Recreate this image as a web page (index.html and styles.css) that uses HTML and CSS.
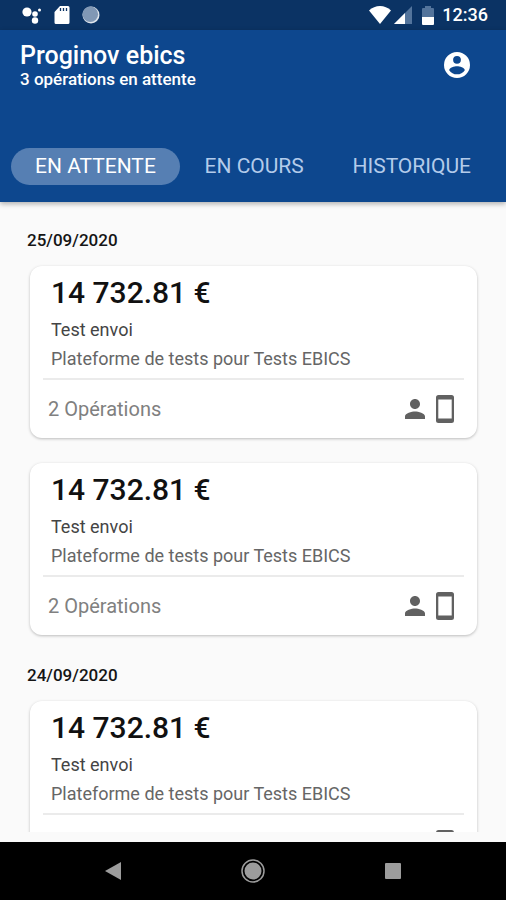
FILE: index.html
```html
<!DOCTYPE html>
<html lang="fr">
<head>
<meta charset="UTF-8">
<meta name="viewport" content="width=device-width, initial-scale=1.0">
<title>Proginov ebics</title>
<link rel="stylesheet" href="styles.css">
</head>
<body>
<svg class="sprite" aria-hidden="true">
  <symbol id="person" viewBox="4 4 16 16">
    <path d="M12 12c2.21 0 4-1.79 4-4s-1.79-4-4-4-4 1.79-4 4 1.79 4 4 4zm0 2c-2.67 0-8 1.34-8 4v2h16v-2c0-2.66-5.33-4-8-4z"/>
  </symbol>
  <symbol id="phone" viewBox="0 0 18 28">
    <path fill-rule="evenodd" d="M2.500 0h13a2.500 2.500 0 0 1 2.500 2.500v23a2.500 2.500 0 0 1-2.500 2.500h-13A2.500 2.500 0 0 1 0 25.500v-23A2.500 2.500 0 0 1 2.500 0zM2.300 4.500v19h13.400v-19z"/>
  </symbol>
</svg>

<div class="status-bar">
  <div class="status-left">
    <svg width="20" height="18" viewBox="0 0 20 18" fill="#fff">
      <circle cx="5" cy="6" r="4.600"/>
      <circle cx="13" cy="8" r="2.800"/>
      <circle cx="17.500" cy="4" r="1.500"/>
      <circle cx="13" cy="14.500" r="3.200"/>
    </svg>
    <svg width="16" height="20" viewBox="0 0 16 20">
      <path fill="#fff" d="M6 1h8a1.500 1.500 0 0 1 1.500 1.500v15A1.500 1.500 0 0 1 14 19H2a1.500 1.500 0 0 1-1.500-1.500V7z"/>
      <path stroke="#0b3364" stroke-width="1.300" d="M6.500 3v3M9.500 3v3M12.500 3v3"/>
    </svg>
    <svg width="18" height="18" viewBox="0 0 18 18">
      <circle cx="9" cy="9" r="8.500" fill="#dfe5ec"/>
      <circle cx="8.300" cy="8.300" r="7.800" fill="#8198b5"/>
    </svg>
  </div>
  <div class="status-right">
    <svg width="22" height="18" viewBox="0 0 22 18">
      <path fill="#fff" d="M11 18L0 4.500C3 1.500 7 0 11 0s8 1.500 11 4.500z"/>
    </svg>
    <svg width="18" height="18" viewBox="0 0 18 18">
      <path fill="#53749c" d="M18 0v18H0z"/>
      <path fill="#fff" d="M11 7v11H0z"/>
    </svg>
    <svg class="battery" width="12" height="19" viewBox="0 0 12 19">
      <path fill="#53749c" d="M3 0h6v2h2a1 1 0 0 1 1 1v9H0V3a1 1 0 0 1 1-1h2z"/>
      <path fill="#fff" d="M0 11h12v7a1 1 0 0 1-1 1H1a1 1 0 0 1-1-1z"/>
    </svg>
    <span class="clock">12:36</span>
  </div>
</div>

<header class="app-header">
  <div class="title-row">
    <div>
      <h1>Proginov ebics</h1>
      <p class="subtitle">3 opérations en attente</p>
    </div>
    <button class="account" aria-label="Compte">
      <svg width="26" height="26" viewBox="2 2 20 20" fill="#fff">
        <path fill-rule="evenodd" d="M12 2a10 10 0 1 0 0 20 10 10 0 0 0 0-20zm0 3a3 3 0 1 1 0 6 3 3 0 0 1 0-6zm0 14.200c-2.500 0-4.710-1.280-6-3.220.03-1.990 4-3.080 6-3.080s5.970 1.090 6 3.080c-1.290 1.940-3.500 3.220-6 3.220z"/>
      </svg>
    </button>
  </div>
  <nav class="tabs">
    <button class="tab active">EN ATTENTE</button>
    <button class="tab">EN COURS</button>
    <button class="tab">HISTORIQUE</button>
  </nav>
</header>

<main class="list">
  <h2>25/09/2020</h2>
  <article class="card">
    <div class="card-body">
      <p class="amount">14 732.81 €</p>
      <p class="label">Test envoi</p>
      <p class="account-name">Plateforme de tests pour Tests EBICS</p>
    </div>
    <div class="card-footer">
      <span>2 Opérations</span>
      <svg class="person"><use href="#person"/></svg>
      <svg class="phone"><use href="#phone"/></svg>
    </div>
  </article>
  <article class="card">
    <div class="card-body">
      <p class="amount">14 732.81 €</p>
      <p class="label">Test envoi</p>
      <p class="account-name">Plateforme de tests pour Tests EBICS</p>
    </div>
    <div class="card-footer">
      <span>2 Opérations</span>
      <svg class="person"><use href="#person"/></svg>
      <svg class="phone"><use href="#phone"/></svg>
    </div>
  </article>
  <h2>24/09/2020</h2>
  <article class="card">
    <div class="card-body">
      <p class="amount">14 732.81 €</p>
      <p class="label">Test envoi</p>
      <p class="account-name">Plateforme de tests pour Tests EBICS</p>
    </div>
    <div class="card-footer">
      <svg class="person"><use href="#person"/></svg>
      <svg class="phone"><use href="#phone"/></svg>
    </div>
  </article>
</main>

<div class="nav-bar">
  <button aria-label="Retour">
    <svg width="16" height="18" viewBox="0 0 16 18"><path fill="#9c9c9c" d="M16 0v18L0 9z"/></svg>
  </button>
  <button aria-label="Accueil">
    <svg width="24" height="24" viewBox="0 0 24 24">
      <circle cx="12" cy="12" r="11" fill="none" stroke="#9c9c9c" stroke-width="1.500"/>
      <circle cx="12" cy="12" r="8.500" fill="#9c9c9c"/>
    </svg>
  </button>
  <button aria-label="Applications">
    <svg width="16" height="16" viewBox="0 0 16 16"><rect width="16" height="16" rx="1" fill="#9c9c9c"/></svg>
  </button>
</div>
</body>
</html>
```
FILE: styles.css
```css
* {
  box-sizing: border-box;
}
body {
  font-family: Roboto, "Liberation Sans", sans-serif;
  background-color: #fafafa;
  margin: 0;
  height: 100vh;
  display: flex;
  flex-direction: column;
}
h1, h2, p {
  margin: 0;
}
button {
  font-family: inherit;
  background: none;
  border: none;
  padding: 0;
  cursor: pointer;
}
svg {
  display: block;
  flex: none;
}
.sprite {
  position: absolute;
  width: 0;
  height: 0;
}

.status-bar {
  height: 30px;
  flex: none;
  background-color: #0b3364;
  display: flex;
  justify-content: space-between;
  align-items: center;
  padding: 0 18px 0 22px;
}
.status-left {
  display: flex;
  align-items: center;
  gap: 12px;
}
.status-right {
  display: flex;
  align-items: center;
  gap: 4px;
}
.status-right svg:first-child {
  margin-right: -1px;
}
.battery {
  margin: 0 4px 0 6px;
}
.clock {
  color: white;
  font-size: 18px;
  font-weight: 500;
  line-height: 30px;
}

.app-header {
  flex: none;
  background-color: #0d478e;
  color: white;
  padding: 12px 0 17px;
  box-shadow: 0 2px 5px rgba(0, 0, 0, 0.3);
  z-index: 1;
}
.title-row {
  display: flex;
  justify-content: space-between;
  align-items: center;
  padding: 0 36px 0 20px;
}
h1 {
  font-size: 25px;
  font-weight: 500;
  line-height: 28px;
}
.subtitle {
  font-size: 17px;
  font-weight: 500;
  line-height: 18px;
}
.tabs {
  display: flex;
  justify-content: space-between;
  padding: 0 11px;
  margin-top: 60px;
}
.tab {
  color: #b3cbea;
  font-size: 21px;
  line-height: 37px;
  padding: 0 24px;
  border-radius: 19px;
  white-space: nowrap;
}
.tab.active {
  color: white;
  background-color: #567fb3;
}

.list {
  flex: 1;
  min-height: 0;
  overflow: hidden;
  margin-bottom: 10px;
  padding: 28px 29px 0 30px;
}
h2 {
  font-size: 17px;
  font-weight: 500;
  line-height: 20px;
  margin: 0 -3px 16px;
  color: #151515;
}
.card {
  background-color: white;
  border-radius: 12px;
  box-shadow: 0 1px 3px rgba(0, 0, 0, 0.25);
  margin-bottom: 25px;
  padding: 0 13px;
}
.card + h2 {
  margin-top: 30px;
}
.card-body {
  padding: 10px 8px 5px;
  border-bottom: 2px solid #ebebeb;
}
.amount {
  font-size: 30px;
  font-weight: 500;
  line-height: 34px;
  color: #111;
  margin-bottom: 5px;
}
.label {
  font-size: 18px;
  line-height: 30px;
  color: #444;
}
.account-name {
  font-size: 18px;
  line-height: 28px;
  color: #666;
}
.card-footer {
  display: flex;
  align-items: center;
  height: 58px;
  padding: 0 10px 0 5px;
  font-size: 20px;
  color: #808080;
}
.card-footer svg {
  fill: #616161;
}
.person {
  width: 20px;
  height: 20px;
  margin-left: auto;
}
.phone {
  width: 18px;
  height: 28px;
  margin-left: 11px;
}

.nav-bar {
  flex: none;
  height: 58px;
  background-color: black;
  display: flex;
  justify-content: center;
}
.nav-bar button {
  width: 140px;
  display: flex;
  justify-content: center;
  align-items: center;
}
```
